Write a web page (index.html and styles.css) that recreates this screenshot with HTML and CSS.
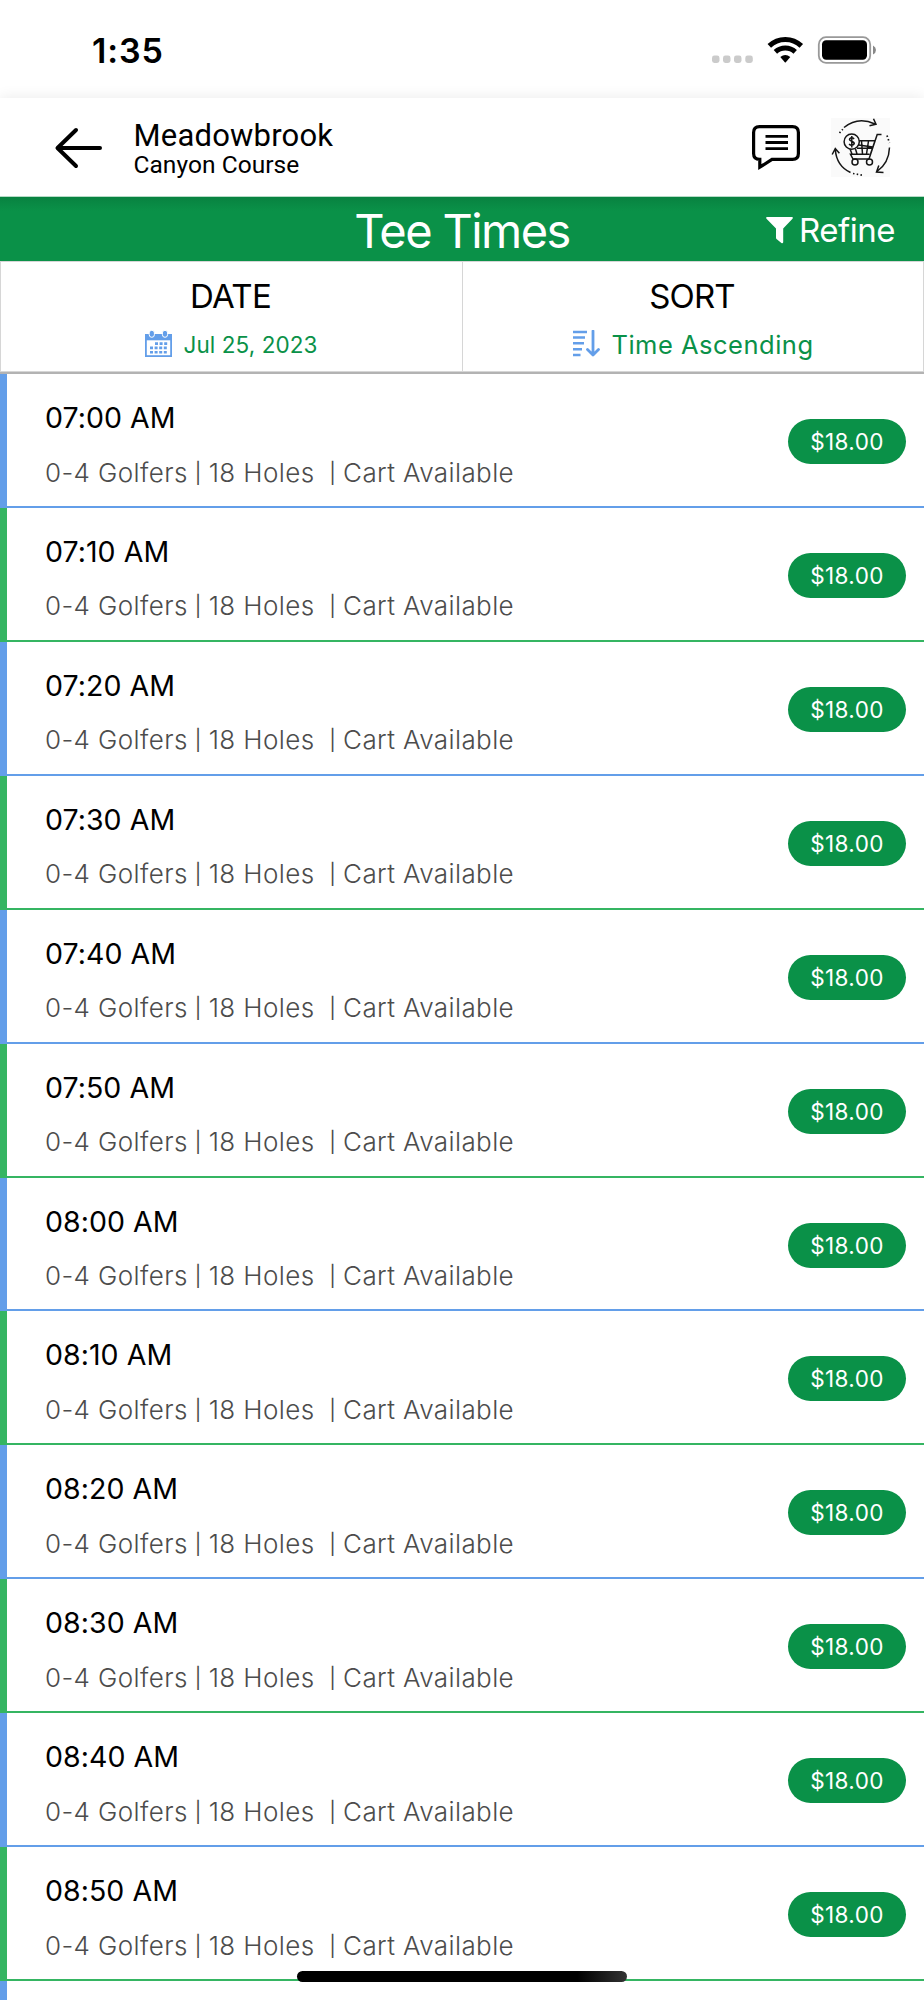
FILE: index.html
```html
<!DOCTYPE html>
<html lang="en">
<head>
<meta charset="utf-8">
<title>Tee Times</title>
<link rel="stylesheet" href="styles.css">
</head>
<body>
<div class="status">
  <span class="clock">1:35</span>
  <svg class="status-icons" viewBox="0 0 166 30" width="166" height="30">
    <g fill="#cbcbcb"><rect x="0" y="20.5" width="7.5" height="7.5" rx="2.4"/><rect x="11" y="20.5" width="7.5" height="7.5" rx="2.4"/><rect x="22" y="20.5" width="7.5" height="7.5" rx="2.4"/><rect x="33.3" y="20.5" width="7.5" height="7.5" rx="2.4"/></g>
    <g fill="none" stroke="#000" stroke-width="5"><path d="M57.3 10.9A23 23 0 0 1 89.3 10.9"/><path d="M63.4 16.9A14.5 14.5 0 0 1 83.2 16.9"/></g>
    <path d="M68.3 21.9Q73.3 18.2 78.3 21.9L73.8 27.3Q73.3 27.8 72.8 27.3Z"/>
    <rect x="106.8" y="2.2" width="51.4" height="25.6" rx="7.2" fill="none" stroke="#999" stroke-width="1.8"/>
    <rect x="110" y="5.2" width="45" height="19.6" rx="4.2"/>
    <path d="M161 10.6Q164 12.2 164 15T161 19.6Z" fill="#888"/>
  </svg>
</div>
<header class="header">
  <svg class="back" viewBox="0 0 50 44" width="50" height="44" fill="none" stroke="#000" stroke-width="4" stroke-linecap="round" stroke-linejoin="round"><path d="M46 22H4M22 4L3.5 22L22 40"/></svg>
  <div class="course"><div class="club">Meadowbrook</div><div class="name">Canyon Course</div></div>
  <svg class="chat" viewBox="0 0 50 48" width="50" height="48" fill="none" stroke="#000" stroke-width="3.2"><path d="M8.5 3.6H41.5Q47.4 3.6 47.4 9.5V30.5Q47.4 36.4 41.5 36.4H21L8.8 44.2V36.4Q2.6 36.4 2.6 30.5V9.5Q2.6 3.6 8.5 3.6Z"/><path d="M14.5 13.4H37M14.5 19.5H37M14.5 25.6H37" stroke-width="2.9"/></svg>
  <svg class="cart" viewBox="0 0 60 60" width="60" height="60" fill="none" stroke="#151515" stroke-width="1.5">
    <rect x="0" y="0" width="59" height="59" fill="#fafafa" stroke="none"/>
    <path d="M13 9.5Q27-2 44 6M38.5 7.8L45 6.3L42.5.8M58.5 29.5Q58 45 46 53.5M52.5 54.5L45.5 54L47.8 47.5M19.5 54.5Q5.5 48 4.3 31.5M1.2 36.5L4.3 30.5L8.4 35.2"/>
    <path d="M8.5 15L11.8 11.2M56 17.5L58.5 25M22 55.5L31 57.2" stroke-width="1.7" stroke-dasharray="1.5 2.3"/>
    <path d="M50.5 16.5H46.2L38 41H22L19.5 36.3H38.5M28 22.8H44L39.5 36M19 31L21 36M27.5 27L41.8 29M26 30.2H41.4M24.5 31L26 36M30.5 23L31.5 36M37.5 23L35.5 36"/>
    <circle cx="20.7" cy="23.7" r="7.6" fill="#fafafa"/><circle cx="24" cy="44" r="3"/><circle cx="38.5" cy="44" r="3"/>
    <path d="M23.2 20.8Q20.5 18.8 18.7 20.8C17.3 23.4 23.9 23 23.2 25.8Q21.2 28.6 18 26.2M20.8 18V29.5"/>
  </svg>
</header>
<div class="titlebar">
  <h1>Tee Times</h1>
  <div class="refine"><svg viewBox="0 0 27 27" width="27" height="27" fill="#fff"><path d="M1 0H26Q27.4.4 26.5 1.8L17.2 11.5V25.2Q16.8 26.8 15.4 26L10.5 21.9Q10 21.4 10 20.7V11.5L.5 1.8Q-.4.4 1 0Z"/></svg><span>Refine</span></div>
</div>
<div class="tabs">
  <div class="tab"><div class="label">DATE</div>
    <div class="value date"><svg viewBox="0 0 27 27" width="27" height="27"><path d="M0 4H27V27H0Z" fill="#639ee9"/><path d="M1.8 10.3H25.2V25.2H1.8Z" fill="#fff"/><g fill="#639ee9" stroke="#fff" stroke-width="1"><rect x="4.2" y=".3" width="5.2" height="7" rx="2.6"/><rect x="17.4" y=".3" width="5.2" height="7" rx="2.6"/></g><path d="M10 13.6H22.3M5 17.9H22.3M5 22.3H22.3" stroke="#639ee9" stroke-width="2.6" stroke-dasharray="3 1.6"/></svg><span>Jul 25, 2023</span></div>
  </div>
  <div class="tab"><div class="label sort-label">SORT</div>
    <div class="value sort"><svg viewBox="0 0 28 27" width="28" height="27" fill="none" stroke="#639ee9" stroke-width="2.6"><path d="M1 2H15M1 7.5H13M1 13.3H12M1 19.2H10M1 25H8.5"/><path d="M21 1V25M15.5 19.5L21 25L26.5 19.5" stroke-width="2.8" stroke-linecap="round" stroke-linejoin="round"/></svg><span>Time Ascending</span></div>
  </div>
</div>
<main class="list">
  <div class="row"><div><div class="time">07:00 AM</div><div class="info">0-4 Golfers <i>|</i> 18 Holes &nbsp;<i>|</i> Cart Available</div></div><div class="price">$18.00</div></div>
  <div class="row"><div><div class="time">07:10 AM</div><div class="info">0-4 Golfers <i>|</i> 18 Holes &nbsp;<i>|</i> Cart Available</div></div><div class="price">$18.00</div></div>
  <div class="row"><div><div class="time">07:20 AM</div><div class="info">0-4 Golfers <i>|</i> 18 Holes &nbsp;<i>|</i> Cart Available</div></div><div class="price">$18.00</div></div>
  <div class="row"><div><div class="time">07:30 AM</div><div class="info">0-4 Golfers <i>|</i> 18 Holes &nbsp;<i>|</i> Cart Available</div></div><div class="price">$18.00</div></div>
  <div class="row"><div><div class="time">07:40 AM</div><div class="info">0-4 Golfers <i>|</i> 18 Holes &nbsp;<i>|</i> Cart Available</div></div><div class="price">$18.00</div></div>
  <div class="row"><div><div class="time">07:50 AM</div><div class="info">0-4 Golfers <i>|</i> 18 Holes &nbsp;<i>|</i> Cart Available</div></div><div class="price">$18.00</div></div>
  <div class="row"><div><div class="time">08:00 AM</div><div class="info">0-4 Golfers <i>|</i> 18 Holes &nbsp;<i>|</i> Cart Available</div></div><div class="price">$18.00</div></div>
  <div class="row"><div><div class="time">08:10 AM</div><div class="info">0-4 Golfers <i>|</i> 18 Holes &nbsp;<i>|</i> Cart Available</div></div><div class="price">$18.00</div></div>
  <div class="row"><div><div class="time">08:20 AM</div><div class="info">0-4 Golfers <i>|</i> 18 Holes &nbsp;<i>|</i> Cart Available</div></div><div class="price">$18.00</div></div>
  <div class="row"><div><div class="time">08:30 AM</div><div class="info">0-4 Golfers <i>|</i> 18 Holes &nbsp;<i>|</i> Cart Available</div></div><div class="price">$18.00</div></div>
  <div class="row"><div><div class="time">08:40 AM</div><div class="info">0-4 Golfers <i>|</i> 18 Holes &nbsp;<i>|</i> Cart Available</div></div><div class="price">$18.00</div></div>
  <div class="row"><div><div class="time">08:50 AM</div><div class="info">0-4 Golfers <i>|</i> 18 Holes &nbsp;<i>|</i> Cart Available</div></div><div class="price">$18.00</div></div>
  <div class="row next"></div>
</main>
<div class="home"></div>
</body>
</html>
```
FILE: styles.css
```css
* { box-sizing: border-box; }
body { margin: 0; height: 2000px; overflow: hidden; position: relative; background: #fff; font-family: Inter, "Liberation Sans", sans-serif; color: #000; }
svg { display: block; flex: none; }
.status { height: 98px; padding: 0 46px 0 92px; display: flex; justify-content: space-between; align-items: flex-start; }
.clock { font-size: 34px; font-weight: 600; line-height: 40px; margin-top: 31px; letter-spacing: .9px; }
.status-icons { margin-top: 35px; }
.header { height: 99px; position: relative; z-index: 1; background: #fff; display: flex; align-items: flex-start; box-shadow: 0 0 14px rgba(0,0,0,.09); clip-path: inset(-14px 0 0); border-bottom: 1px solid #b5dbc6; }
.back { margin: 28px 0 0 53.5px; }
.course { font-family: Roboto, "Liberation Sans", sans-serif; margin: 20px 0 0 30px; width: 300px; }
.club { font-size: 31px; line-height: 36px; letter-spacing: .2px; }
.name { font-size: 24.5px; line-height: 24px; margin-top: -1px; letter-spacing: .05px; }
.chat { margin: 25px 0 0 317px; }
.cart { margin: 20px 0 0 30.5px; }
.titlebar { height: 64px; background: linear-gradient(#088240, #0a9148 14px); color: #fff; display: grid; grid-template-columns: 1fr auto 1fr; }
h1 { grid-column: 2; margin: 0; font-size: 47px; font-weight: 400; line-height: 68px; letter-spacing: -1.6px; }
.refine { display: flex; justify-content: flex-end; gap: 6px; padding: 20px 29px 0 0; font-size: 33px; font-weight: 400; line-height: 27px; letter-spacing: -.5px; }
.tabs { height: 113px; display: grid; grid-template-columns: 1fr 1fr; border-bottom: 2px solid #b3b3b3; }
.tab { border: 1px solid #d6d6d6; border-right-width: 0; text-align: center; }
.tab:last-child { border-right-width: 1px; }
.label { font-size: 33px; line-height: 40px; margin: 14px 2px 0 0; letter-spacing: -.65px; }
.sort-label { letter-spacing: -.8px; }
.value { display: flex; justify-content: center; align-items: center; color: #0a9148; line-height: 30px; height: 30px; margin-top: 12px; }
.date { font-size: 22.5px; gap: 11px; letter-spacing: .08px; }
.date span { padding-top: 4px; }
.sort { font-size: 25.5px; gap: 11px; letter-spacing: .5px; }
.sort span { padding-top: 3px; }
.list { height: 1626px; overflow: hidden; }
.row { height: 133.93px; border-left: 7px solid #639ee9; border-bottom: 2px solid #639ee9; padding: 24px 18px 0 38px; display: flex; justify-content: space-between; align-items: flex-start; }
.row:nth-child(even) { border-color: #35b562; }
.row.next { height: 19px; border-bottom: 0; padding: 0; }
.time { font-size: 28.5px; line-height: 40px; letter-spacing: .05px; }
.info { font-size: 26px; font-weight: 300; line-height: 40px; margin-top: 14.5px; color: #4c4c4c; letter-spacing: .39px; white-space: nowrap; }
.info i { display: inline-block; font-style: normal; margin: 0 -1.5px; transform: scaleY(.78); }
.price { width: 118px; height: 45px; margin-top: 21px; border-radius: 23px; background: #0a9148; color: #fff; font-size: 22.5px; line-height: 45px; text-align: center; letter-spacing: .38px; }
.home { position: absolute; left: 297px; top: 1971px; width: 330px; height: 11px; border-radius: 5.5px; background: linear-gradient(90deg, #000 85%, #333 100%); }
```
